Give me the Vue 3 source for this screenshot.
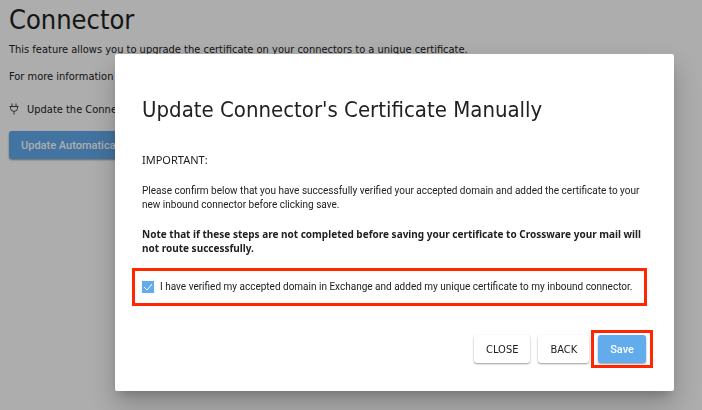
<template>
  <main class="page">
    <h1 class="page-title">Connector</h1>
    <p class="page-text">This feature allows you to upgrade the certificate on your connectors to a unique certificate.</p>
    <p class="page-text">For more information</p>
    <p class="page-text with-icon">
      <svg class="plug" viewBox="0 0 10 12" aria-hidden="true">
        <path d="M3 .5v3M7 .5v3M.5 3.5h9M1.5 3.5v1.7a3.5 3.2 0 0 0 7 0V3.5M5 8.5v3" />
      </svg>
      <span>Update the Connector</span>
    </p>
    <button type="button" class="btn primary">Update Automatically</button>
  </main>

  <div v-if="open" class="backdrop">
    <form class="dialog" role="dialog" aria-modal="true" aria-labelledby="dialog-title" @submit.prevent="close">
      <h2 id="dialog-title" class="dialog-title">Update Connector's Certificate Manually</h2>
      <p class="important">IMPORTANT:</p>
      <p class="note">
        Please confirm below that you have successfully verified your accepted domain and added the certificate to your<br />
        new inbound connector before clicking save.
      </p>
      <p class="note strong">
        Note that if these steps are not completed before saving your certificate to Crossware your mail will<br />
        not route successfully.
      </p>
      <div class="confirm marked">
        <input id="verified" v-model="verified" type="checkbox" class="check" />
        <label for="verified">I have verified my accepted domain in Exchange and added my unique certificate to my inbound connector.</label>
      </div>
      <div class="actions">
        <button type="button" class="btn" @click="close">CLOSE</button>
        <button type="button" class="btn" @click="close">BACK</button>
        <div class="save marked">
          <button type="submit" class="btn primary" :disabled="!verified">Save</button>
        </div>
      </div>
    </form>
  </div>
</template>

<script setup>
import { ref } from 'vue'

const open = ref(true)
const verified = ref(true)

const close = () => {
  open.value = false
}
</script>

<style>
body {
  margin: 0;
  overflow: hidden;
  color: #212121;
  font-family: Tahoma, 'DejaVu Sans Condensed', 'Noto Sans', sans-serif;
}
</style>

<style scoped>
.page {
  padding: 4px 9px;
}
.page-title {
  margin: 0 0 8px;
  font-size: 27px;
  font-weight: 400;
  line-height: 32px;
}
.page-text {
  margin: 0 0 16px;
  font-size: 11px;
  line-height: 11px;
  white-space: nowrap;
}
.with-icon {
  display: flex;
  align-items: center;
  gap: 8px;
  margin: 21px 0 16px;
}
.plug {
  width: 10px;
  height: 12px;
  fill: none;
  stroke: currentColor;
  stroke-width: 0.8;
}

.btn {
  height: 28px;
  padding: 0 12px;
  border: 0;
  border-radius: 3px;
  color: #212121;
  background: #fff;
  box-shadow: 0 1px 2px rgba(0, 0, 0, 0.4);
  font-family: inherit;
  font-size: 11px;
  white-space: nowrap;
  cursor: pointer;
}
.btn.primary {
  color: #fff;
  background: #62abed;
  font-family: Tahoma, Roboto, sans-serif;
  font-weight: 500;
}

.backdrop {
  position: fixed;
  inset: 0;
  display: flex;
  align-items: flex-start;
  padding: 54px 28px 19px 115px;
  background: rgba(0, 0, 0, 0.32);
}
.dialog {
  flex: 1;
  min-width: 0;
  box-sizing: border-box;
  padding: 40px 21px 23px 27px;
  border-radius: 2px;
  background: #fff;
  box-shadow: 0 7px 10px -4px rgba(0, 0, 0, 0.2), 0 14px 28px 2px rgba(0, 0, 0, 0.2);
}
.dialog-title {
  margin: 0 0 27px;
  font-size: 22px;
  font-weight: 400;
  line-height: 32px;
}
.important {
  margin: 0 0 17px;
  font-family: Tahoma, 'Noto Sans', sans-serif;
  font-size: 11px;
  line-height: 14px;
}
.note {
  margin: 0 0 15px;
  font-family: Tahoma, Roboto, sans-serif;
  font-size: 10px;
  line-height: 14px;
}
.strong {
  margin-bottom: 13px;
  font-family: Tahoma, 'Noto Sans', sans-serif;
  font-weight: 700;
}
.marked {
  border: 3px solid #ff2600;
}
.confirm {
  display: flex;
  align-items: center;
  gap: 6px;
  margin: 0 6px 24px -10px;
  padding: 10px 7px;
  font-family: Tahoma, Roboto, sans-serif;
  font-size: 10px;
  line-height: 12px;
  white-space: nowrap;
}
.check {
  appearance: none;
  flex: none;
  width: 12px;
  height: 12px;
  margin: 0;
  background: #fff;
  border: 1px solid #999;
}
.check:checked {
  border: 0;
  background: #62abed url("data:image/svg+xml,%3Csvg xmlns='http://www.w3.org/2000/svg' viewBox='0 0 12 12'%3E%3Cpath d='M2 6l3 3 5-6' fill='none' stroke='white'/%3E%3C/svg%3E");
}
.actions {
  display: flex;
  align-items: center;
  justify-content: flex-end;
  gap: 8px;
}
.save {
  display: flex;
  margin-left: -6px;
  padding: 2px 4px;
}
</style>
